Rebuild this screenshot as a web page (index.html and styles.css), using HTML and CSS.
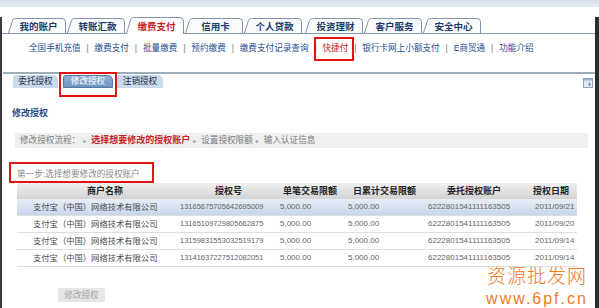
FILE: index.html
```html
<!DOCTYPE html>
<html lang="zh-CN">
<head>
<meta charset="utf-8">
<title>修改授权</title>
<link rel="stylesheet" href="styles.css">
</head>
<body>
<div class="topbar"></div>
<div class="frame">
  <nav class="maintabs">
    <a class="tab"><svg viewBox="0 0 58 16" preserveAspectRatio="none"><path d="M0.5 16 L4.5 2.6 Q5.3 0.5 7.5 0.5 L54 0.5 Q57.5 0.5 57.5 4 L57.5 16"/></svg><span>我的账户</span></a>
    <a class="tab"><svg viewBox="0 0 58 16" preserveAspectRatio="none"><path d="M0.5 16 L4.5 2.6 Q5.3 0.5 7.5 0.5 L54 0.5 Q57.5 0.5 57.5 4 L57.5 16"/></svg><span>转账汇款</span></a>
    <a class="tab active"><svg viewBox="0 0 58 16" preserveAspectRatio="none"><path d="M0.5 16 L4.5 2.6 Q5.3 0.5 7.5 0.5 L54 0.5 Q57.5 0.5 57.5 4 L57.5 16"/></svg><span>缴费支付</span></a>
    <a class="tab"><svg viewBox="0 0 58 16" preserveAspectRatio="none"><path d="M0.5 16 L4.5 2.6 Q5.3 0.5 7.5 0.5 L54 0.5 Q57.5 0.5 57.5 4 L57.5 16"/></svg><span>信用卡</span></a>
    <a class="tab"><svg viewBox="0 0 58 16" preserveAspectRatio="none"><path d="M0.5 16 L4.5 2.6 Q5.3 0.5 7.5 0.5 L54 0.5 Q57.5 0.5 57.5 4 L57.5 16"/></svg><span>个人贷款</span></a>
    <a class="tab gap"><svg viewBox="0 0 58 16" preserveAspectRatio="none"><path d="M0.5 16 L4.5 2.6 Q5.3 0.5 7.5 0.5 L54 0.5 Q57.5 0.5 57.5 4 L57.5 16"/></svg><span>投资理财</span></a>
    <a class="tab"><svg viewBox="0 0 58 16" preserveAspectRatio="none"><path d="M0.5 16 L4.5 2.6 Q5.3 0.5 7.5 0.5 L54 0.5 Q57.5 0.5 57.5 4 L57.5 16"/></svg><span>客户服务</span></a>
    <a class="tab"><svg viewBox="0 0 58 16" preserveAspectRatio="none"><path d="M0.5 16 L4.5 2.6 Q5.3 0.5 7.5 0.5 L54 0.5 Q57.5 0.5 57.5 4 L57.5 16"/></svg><span>安全中心</span></a>
  </nav>

  <div class="subnav">
    <span>全国手机充值</span><span class="sep">|</span>
    <span>缴费支付</span><span class="sep">|</span>
    <span>批量缴费</span><span class="sep">|</span>
    <span>预约缴费</span><span class="sep">|</span>
    <span>缴费支付记录查询</span><span class="sep">|</span>
    <span class="hot">快捷付</span><span class="sep">|</span>
    <span>银行卡网上小额支付</span><span class="sep">|</span>
    <span>E商贸通</span><span class="sep">|</span>
    <span>功能介绍</span>
  </div>

  <div class="rule"></div>

  <div class="subtabs">
    <span class="stab s1">委托授权</span>
    <span class="stab s2 active">修改授权</span>
    <span class="stab s3">注销授权</span>
    <svg class="icon" viewBox="0 0 10 10" width="10" height="10">
      <rect x="0.5" y="0.5" width="9" height="9" fill="#dfe7f1" stroke="#8ea2ba"/>
      <rect x="1" y="1" width="8" height="1.6" fill="#9fb2c8"/>
      <path d="M6.5 4.5 V8 M5 6.3 H8" stroke="#6d84a2" stroke-width="0.9"/>
    </svg>
  </div>

  <h2 class="title">修改授权</h2>

  <div class="flow">
    <span>修改授权流程：</span><span class="arr">▸</span>
    <span class="cur">选择想要修改的授权账户</span><span class="arr">▸</span>
    <span>设置授权限额</span><span class="arr">▸</span>
    <span>输入认证信息</span>
  </div>

  <div class="step">第一步:选择想要修改的授权账户</div>

  <div class="table">
    <div class="thead">
      <span>商户名称</span><span>授权号</span><span>单笔交易限额</span><span>日累计交易限额</span><span>委托授权账户</span><span>授权日期</span>
    </div>
    <div class="row sel">
      <span>支付宝（中国）网络技术有限公司</span><span>13165675705642695009</span><span>5,000.00</span><span>5,000.00</span><span>6222801541111163505</span><span>2011/09/21</span>
    </div>
    <div class="row">
      <span>支付宝（中国）网络技术有限公司</span><span>13165109729805662875</span><span>5,000.00</span><span>5,000.00</span><span>6222801541111163505</span><span>2011/09/20</span>
    </div>
    <div class="row">
      <span>支付宝（中国）网络技术有限公司</span><span>13159831553032519179</span><span>5,000.00</span><span>5,000.00</span><span>6222801541111163505</span><span>2011/09/14</span>
    </div>
    <div class="row">
      <span>支付宝（中国）网络技术有限公司</span><span>13141637227512082051</span><span>5,000.00</span><span>5,000.00</span><span>6222801541111163505</span><span>2011/09/14</span>
    </div>
  </div>

  <button class="btn">修改授权</button>

  <div class="wm">
    <div class="wm1">资源批发网</div>
    <div class="wm2">www.6pf.cn</div>
  </div>
</div>
</body>
</html>
```

FILE: styles.css
```css
html, body {
  margin: 0;
  padding: 0;
}
body {
  width: 599px;
  height: 308px;
  overflow: hidden;
  background: #fff;
  font-family: "Liberation Sans", "Noto Sans CJK SC", sans-serif;
}

.topbar {
  height: 7px;
  background: linear-gradient(#d6dfe9, #e7edf3);
}

.frame {
  position: relative;
  height: 301px;
  box-sizing: border-box;
  border-left: 2px solid #3a3a3a;
  border-right: 4px solid #2c2c2c;
  border-bottom: 2px solid #2c2c2c;
}

/* main tabs */
.maintabs {
  display: flex;
  align-items: flex-end;
  gap: 1px;
  margin-top: 10px;
  height: 16px;
  padding-left: 6px;
  border-bottom: 1px solid #8798ae;
}
.tab {
  position: relative;
  width: 58px;
  height: 15px;
  display: flex;
  align-items: center;
  justify-content: center;
  font-size: 9.5px;
  font-weight: bold;
  color: #1b3a6b;
  text-decoration: none;
}
.tab.gap {
  margin-left: 2px;
}
.tab svg {
  position: absolute;
  left: 0;
  top: 0;
  width: 100%;
  height: 100%;
}
.tab path {
  fill: #fafbfc;
  stroke: #8193ab;
  stroke-width: 1;
  vector-effect: non-scaling-stroke;
}
.tab span {
  position: relative;
  padding-left: 3px;
}
.tab.active {
  height: 17px;
  margin-bottom: -1px;
  color: #c8201f;
}
.tab.active path {
  fill: #fff;
}

/* sub nav */
.subnav {
  display: flex;
  white-space: nowrap;
  margin-top: 8px;
  padding-left: 27px;
  font-size: 8.6px;
  line-height: 12px;
  color: #1d4f8f;
}
.subnav .sep {
  width: 14px;
  text-align: center;
  color: #7a7a7a;
}
.subnav .hot {
  position: relative;
  color: #cc1a1a;
}
.subnav .hot::after {
  content: "";
  position: absolute;
  left: -9px;
  right: -6px;
  top: -5px;
  bottom: -7px;
  border: 2px solid #de1515;
}

.rule {
  margin-top: 18px;
  margin-left: 1px;
  height: 2px;
  background: #9badb9;
}

/* sub tabs */
.subtabs {
  display: flex;
  align-items: stretch;
  margin-top: 1px;
  height: 13px;
  padding-left: 11px;
  padding-right: 2px;
}
.stab {
  position: relative;
  box-sizing: border-box;
  font-size: 8.6px;
  line-height: 13px;
  text-align: center;
  background: #c9daec;
  color: #1f2c40;
  border-radius: 3px 5px 0 0;
}
.stab.s1 { width: 45px; }
.stab.s2 { width: 50px; margin-left: 5px; }
.stab.s3 { width: 46px; margin-left: 4px; }
.stab.active {
  background: linear-gradient(#93b3d6, #6a92bf);
  color: #fff;
  border: 1px solid #55799f;
  line-height: 11px;
}
.stab.active::after {
  content: "";
  position: absolute;
  left: -5px;
  right: -5px;
  top: -4px;
  bottom: -10px;
  border: 2px solid #de1515;
}
.subtabs .icon {
  margin-left: auto;
  align-self: flex-end;
  display: block;
}

.title {
  margin: 19px 0 0 10px;
  font-size: 9px;
  line-height: 12px;
  font-weight: bold;
  color: #1f4b86;
}

/* flow */
.flow {
  display: flex;
  white-space: nowrap;
  margin: 14px 7px 0 13px;
  height: 15px;
  padding-left: 5px;
  background: #efefef;
  font-size: 8.6px;
  line-height: 15px;
  color: #7a7a7a;
}
.flow .arr {
  font-family: "DejaVu Sans", sans-serif;
  font-size: 6px;
  color: #9a9a9a;
  margin: 0 5px 0 3px;
}
.flow .cur {
  color: #c81f1f;
  font-weight: bold;
  font-size: 9px;
}

/* step */
.step {
  position: relative;
  margin-top: 14px;
  height: 21px;
  box-sizing: border-box;
  padding: 6px 0 0 15px;
  font-size: 8.6px;
  line-height: 12px;
  color: #8a8a8a;
}
.step::after {
  content: "";
  position: absolute;
  left: 7px;
  top: 0;
  width: 145px;
  height: 21px;
  box-sizing: border-box;
  border: 2px solid #de1515;
}

/* table */
.table {
  margin-left: 15px;
  width: 560px;
}
.thead,
.row {
  display: grid;
  grid-template-columns: 158px 100px 68px 80px 105px 49px;
  white-space: nowrap;
}
.thead {
  height: 16px;
  background: linear-gradient(#efefef, #d3d3d3);
  font-size: 9px;
  font-weight: bold;
  line-height: 16px;
  color: #222;
}
.thead span:nth-child(1) { padding-left: 70px; }
.thead span:nth-child(2) { padding-left: 40px; }
.thead span:nth-child(3) { padding-left: 8px; }
.thead span:nth-child(4) { padding-left: 10px; }
.thead span:nth-child(5) { padding-left: 24px; }
.thead span:nth-child(6) { padding-left: 5px; }

.row {
  height: 17px;
  box-sizing: border-box;
  border-bottom: 1px solid #dedede;
  font-size: 8px;
  line-height: 16px;
  color: #666;
}
.row span:nth-child(1) {
  padding-left: 16px;
  font-size: 8.3px;
  color: #4a4a4a;
}
.row span:nth-child(2) { padding-left: 5px; font-size: 7.5px; }
.row span:nth-child(3) { padding-left: 5px; }
.row span:nth-child(4) { padding-left: 5px; }
.row span:nth-child(5) { padding-left: 5px; }
.row span:nth-child(6) { padding-left: 7px; }
.row.sel {
  background: linear-gradient(#e8eef7, #c8d6ea);
}

.btn {
  display: block;
  margin: 21px 0 0 56px;
  width: 47px;
  height: 14px;
  padding: 0;
  border: 0;
  background: #e6e6e6;
  color: #a3a3a3;
  font-family: inherit;
  font-size: 8.6px;
  line-height: 14px;
}

/* watermark */
.wm {
  position: absolute;
  right: 6px;
  top: 247px;
  width: 104px;
  text-align: center;
  color: #f07a1e;
}
.wm1 {
  font-family: "Noto Sans CJK SC", sans-serif;
  font-size: 19px;
  font-weight: 300;
  line-height: 22px;
  letter-spacing: 1px;
}
.wm2 {
  font-family: "Liberation Sans", sans-serif;
  font-size: 16px;
  line-height: 20px;
  letter-spacing: 2px;
  margin-top: 3px;
}
```
